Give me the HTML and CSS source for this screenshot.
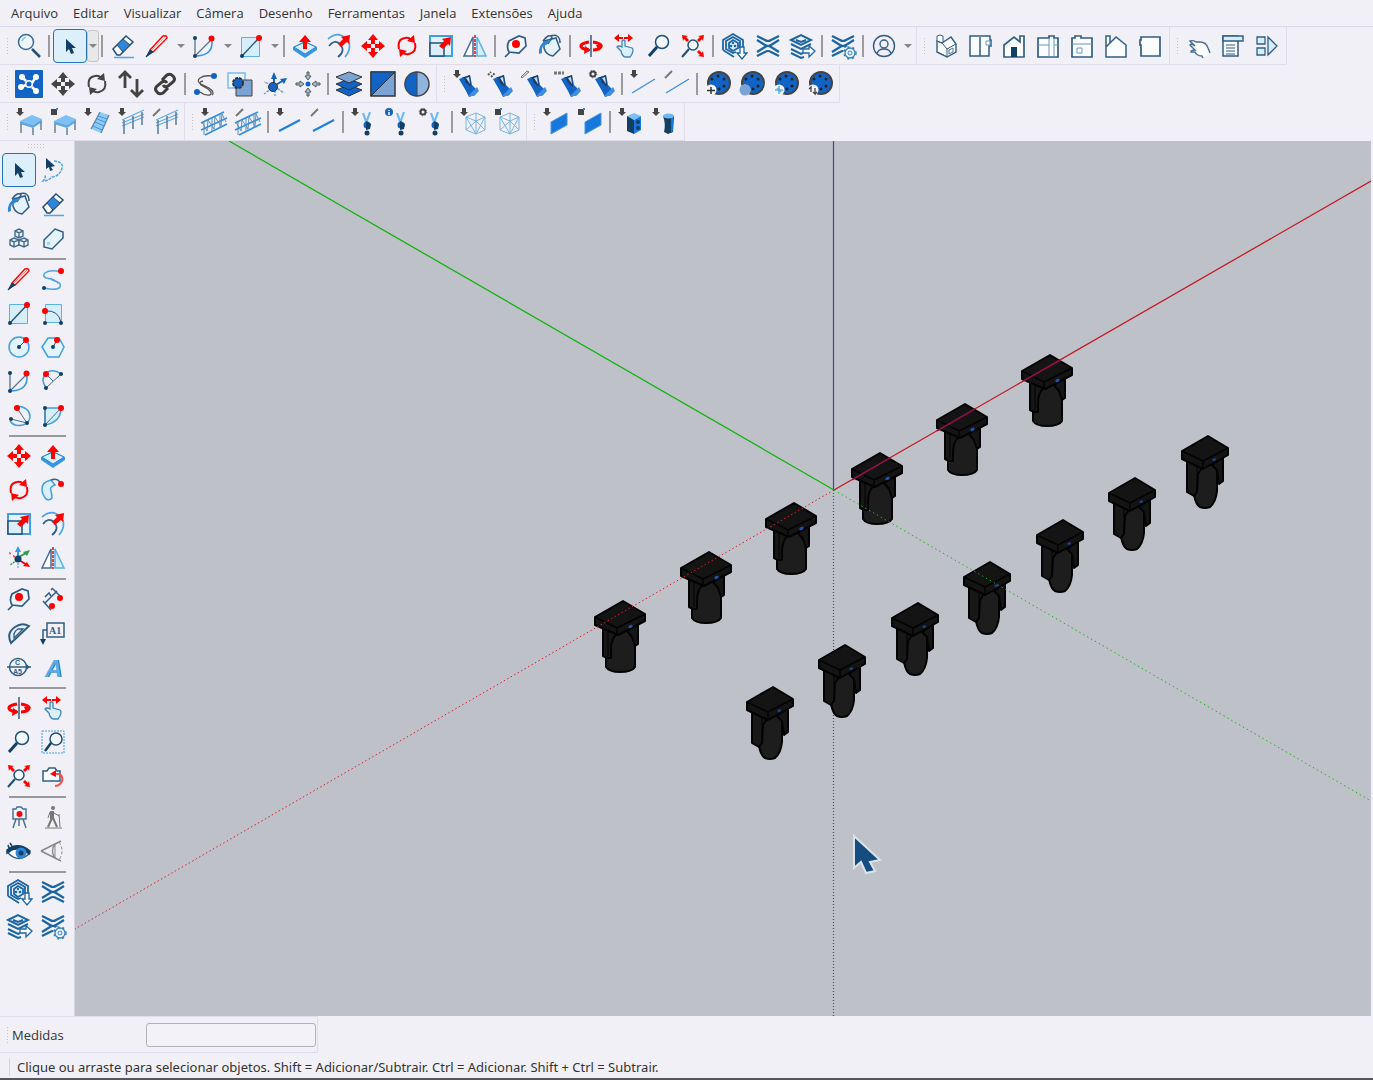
FILE: index.html
```html
<!DOCTYPE html>
<html lang="pt-BR">
<head>
<meta charset="utf-8">
<title>Modelador 3D</title>
<link rel="stylesheet" href="styles.css">
</head>
<body>
<svg class="sprite" aria-hidden="true">
<defs>
<symbol id="cursor" viewBox="0 0 28 28"><path d="M10 7v13l3-3 2 5 3-1-2-5h4z" fill="#123f66"/></symbol>
<symbol id="search" viewBox="0 0 28 28"><circle cx="11" cy="10" r="7.5" fill="#eef7fc" stroke="#3a6a94" stroke-width="1.5"/><path d="M7 9q1-3 4-4" stroke="#7cc3ee" fill="none" stroke-width="1.5"/><path d="M17 17l8 8" stroke="#234f78" stroke-width="2.5"/></symbol>
<symbol id="zoom" viewBox="0 0 28 28"><circle cx="17" cy="10" r="6.5" fill="#f3f8fc" stroke="#1f5078" stroke-width="1.5"/><path d="M12 15l-8 9" stroke="#123f66" stroke-width="3"/></symbol>
<symbol id="zoomwin" viewBox="0 0 28 28"><path d="M3 3h22v22H3z" fill="none" stroke="#3f9fe0" stroke-dasharray="2 1"/><circle cx="17" cy="11" r="6" fill="#f3f8fc" stroke="#1f5078" stroke-width="1.5"/><path d="M12 15l-6 8" stroke="#123f66" stroke-width="2.5"/></symbol>
<symbol id="extents" viewBox="0 0 28 28"><circle cx="14" cy="13" r="5" fill="#f3f8fc" stroke="#1f5078" stroke-width="1.5"/><path d="M10 17l-7 8" stroke="#1f5078" stroke-width="2"/><path d="M3 3l6 1-2 1 3 3-2 2-3-3-1 2zM25 3l-6 1 2 1-3 3 2 2 3-3 1 2zM25 25l-6-1 2-1-3-3 2-2 3 3 1-2z" fill="#f00"/></symbol>
<symbol id="eraser" viewBox="0 0 28 28"><path d="M4 17L17 4l7 6-13 13H8z" fill="#fff" stroke="#234f78" stroke-width="1.5"/><path d="M8 13l6-6 7 6-7 7z" fill="#2f86d6" stroke="#234f78"/><path d="M5 25.500h20" stroke="#4ea6e6" stroke-width="1.500"/></symbol>
<symbol id="pencil" viewBox="0 0 28 28"><path d="M7 18L20 4q4-1 4 2L10 20z" fill="#fff" stroke="#f00" stroke-width="1.400"/><path d="M9 18L22 5" stroke="#f66" stroke-width=".7"/><path d="M3 25l4-7 3 2z" fill="#123f66" stroke="#123f66"/></symbol>
<symbol id="arc" viewBox="0 0 28 28"><path d="M5 6v18L21 8" fill="none" stroke="#567590" stroke-width="1.300"/><path d="M22 9q1 14-15 15" fill="none" stroke="#3797e2" stroke-width="1.600"/><circle cx="5" cy="6" r="2" fill="#123f66"/><circle cx="5" cy="24" r="2" fill="#123f66"/><circle cx="21.500" cy="6.500" r="3" fill="#f00"/></symbol>
<symbol id="rect" viewBox="0 0 28 28"><path d="M4.500 5.500h18v19h-18z" fill="#d6eefa" stroke="#5ab0ea"/><path d="M5 24L21 7" stroke="#234f78" stroke-width="1.300"/><circle cx="5" cy="24" r="2" fill="#123f66"/><circle cx="22" cy="6" r="3" fill="#f00"/></symbol>
<symbol id="push" viewBox="0 0 28 28"><path d="M2 15l12-6 12 6v3l-12 8-12-8z" fill="#3797e2"/><path d="M3 15l11-5 11 5-11 7z" fill="#d9f0fb" stroke="#2c87d4"/><path d="M12 17v-7H8l6-7 6 7h-4v7z" fill="#f00"/></symbol>
<symbol id="offset" viewBox="0 0 28 28"><g fill="none" stroke-width="1.700"><path d="M3 7Q13-1 20 6M24 10q2 8-4 15" stroke="#4ea6e6"/><path d="M4 14q5-7 11-2 6 7-2 13" stroke="#315d84"/></g><path d="M13 12l5-5-2-2 9-2-1 9-2-2-6 5z" fill="#f00"/></symbol>
<symbol id="move" viewBox="0 0 28 28"><path d="M14 2l5 6h-3v4h-4V8H9zM14 26l5-6h-3v-4h-4v4H9zM2 14l6-5v3h4v4H8v3zM26 14l-6-5v3h-4v4h4v3z" fill="currentColor"/></symbol>
<symbol id="rotate" viewBox="0 0 28 28"><g fill="none" stroke="currentColor" stroke-width="2"><path d="M6 17Q4 7 12 6q3-1 7 2M22 11q2 9-6 11-4 1-8-2"/></g><path d="M21 3l1 8-8-2zM7 25l-1-8 8 2z" fill="currentColor"/></symbol>
<symbol id="scale" viewBox="0 0 28 28"><path d="M3 4h22v20H3z" fill="#e2f3fb" stroke="#3f9fe0" stroke-width="2"/><path d="M3 11h14v13H3z" fill="#d9eefa" stroke="#234f78" stroke-width="1.500"/><path d="M12 14l5-5-2-2 9-2-1 9-2-2-5 5z" fill="#f00"/></symbol>
<symbol id="flip" viewBox="0 0 28 28"><path d="M12 5v19H3z" fill="#fff" stroke="#456d91" stroke-width="1.500"/><path d="M16 5v19h9z" fill="#d6eefa" stroke="#5ab0ea" stroke-width="1.500"/><path d="M14 3v22" stroke="#f00" stroke-width="1.500" stroke-dasharray="3 1"/></symbol>
<symbol id="tape" viewBox="0 0 28 28"><path d="M3 25l5-5M7 20q-3-5 0-11l10-5 6 2 1 8-7 7z" fill="#edf6fb" stroke="#315d84" stroke-width="1.700"/><circle cx="14" cy="12" r="4" fill="#f00"/></symbol>
<symbol id="paint" viewBox="0 0 28 28"><path d="M8 9l12-3 4 11-7 7q-7-1-9-8z" fill="#e5f4fc" stroke="#315d84" stroke-width="1.500"/><path d="M7 9q6-8 9-4l-4 7M14 4q10-3 10 7" fill="none" stroke="#315d84" stroke-width="1.500"/><path d="M3 22q-1-9 6-13l7-1q-6 6-9 6-2 3-1 7z" fill="#2f86d6"/></symbol>
<symbol id="orbit" viewBox="0 0 28 28"><path d="M12 10q-11 2-7 6 3 2 7 2M16 10q11 2 7 6-3 2-7 2" fill="none" stroke="#f00" stroke-width="3"/><path d="M8 14l6 4-7 4zM19 13l7 0-4 6z" fill="#f00"/><path d="M14 3v22" stroke="#657f9c" stroke-width="2"/></symbol>
<symbol id="pan" viewBox="0 0 28 28"><path d="M3 6l5-4v3h4v2H8v3zM22 6l-5-4v3h-4v2h4v3z" fill="#f00"/><path d="M10 19l-4-4q1-2 5 0V9q2-2 3 0v5l7 2q2 1 0 6l-2 3h-5q-3-1-4-6z" fill="#d9f0fb" stroke="#4384b4" stroke-width="1.300"/></symbol>
<symbol id="warehouse" viewBox="0 0 28 28"><g fill="none" stroke="#1c65a3" stroke-width="1.800"><path d="M3 18V8l10-6 10 6v9M3 18l11 7"/><path d="M16 20l-3 1-7-4V9l7-4 7 4v7"/><path d="M13 8l5 3v5l-5 3-4-3v-5z" fill="#dceefa"/></g><circle cx="11" cy="14" r="1.300" fill="#1c65a3"/><circle cx="15" cy="14" r="1.300" fill="#1c65a3"/><circle cx="13" cy="11" r="1.200" fill="#1c65a3"/><path d="M20 15h4v6h3l-5 6-5-6h3z" fill="#fff" stroke="#1c65a3" stroke-width="1.300"/></symbol>
<symbol id="ext" viewBox="0 0 28 28"><g fill="none" stroke="#1c65a3" stroke-width="2.200"><path d="M3 4l8 4q3 2 6 0l8-4M3 8l8 5q3 2 6 0l8-5M3 20l8-5q3-2 6 0l8 5M3 24l8-4q3-2 6 0l8 4"/></g></symbol>
<symbol id="layersout" viewBox="0 0 28 28"><g fill="none" stroke="#1c65a3" stroke-width="2"><path d="M3 8l10-5 10 5-10 5zM8 8l5 2 5-2"/><path d="M3 12l10 5 10-5M3 17l10 5 2-1M3 21l10 5 3-1"/></g><path d="M15 17h6v-3l6 5-6 6v-4h-6z" fill="#fff" stroke="#1c65a3" stroke-width="1.300"/></symbol>
<symbol id="extgear" viewBox="0 0 28 28"><use href="#ext"/><circle cx="21" cy="21" r="7" fill="#f1f0f6"/><circle cx="21" cy="21" r="5" fill="#edf6fb" stroke="#3a7fb5" stroke-width="1.300"/><circle cx="21" cy="21" r="6" fill="none" stroke="#3a7fb5" stroke-width="1.500" stroke-dasharray="2 3"/><circle cx="21" cy="21" r="2" fill="none" stroke="#3a7fb5"/></symbol>
<symbol id="user" viewBox="0 0 28 28"><g fill="none" stroke="#315d84" stroke-width="1.400"><circle cx="14" cy="14" r="10.500"/><circle cx="14" cy="12" r="4"/><path d="M7 22q1-5 7-5t7 5"/></g></symbol>
<symbol id="iso" viewBox="0 0 28 28"><g fill="#fafcfe" stroke="#315d84" stroke-width="1.400"><path d="M5 9l5 2 9-6 5 7v8l-9 5-10-5z"/><path d="M5 9V4l3-1 3 1v7zM10 11l5 6 9-5M15 17v8" stroke-width="1"/><path d="M17 18l4-2v4l-4 2z" stroke-width=".8"/></g></symbol>
<symbol id="top" viewBox="0 0 28 28"><path d="M4 4h20v4h1v6h-2v10H4zM14 5v19" fill="#fafcfe" stroke="#315d84" stroke-width="1.500"/><path d="M20 9h4v4h-4z" fill="#fff" stroke="#6d97bb"/></symbol>
<symbol id="front" viewBox="0 0 28 28"><path d="M4 25V13l10-8 6 5V4h4v21z" fill="#fafcfe" stroke="#315d84" stroke-width="1.700"/><path d="M11 15h6v10h-6z" fill="#123f66"/></symbol>
<symbol id="right" viewBox="0 0 28 28"><path d="M4 6h11V4h5v2h4v19H4z" fill="#fafcfe" stroke="#315d84" stroke-width="1.700"/><path d="M4 13h11M20 13h4M15 6v19M20 6v19" stroke="#6d97bb"/></symbol>
<symbol id="back" viewBox="0 0 28 28"><path d="M4 6h3V4h6v2h11v19H4z" fill="#fafcfe" stroke="#315d84" stroke-width="1.700"/><path d="M4 12h20M9 16h5v5H9z" fill="none" stroke="#6d97bb"/></symbol>
<symbol id="left" viewBox="0 0 28 28"><path d="M4 25V4h4v7l6-6 10 8v12zM8 11l-4 4" fill="#fafcfe" stroke="#315d84" stroke-width="1.500"/></symbol>
<symbol id="bottom" viewBox="0 0 28 28"><path d="M5 5h19v19H5V13H4V8h1z" fill="#fafcfe" stroke="#315d84" stroke-width="1.700"/></symbol>
<symbol id="handgrab" viewBox="0 0 28 28"><path d="M18 26l-1-2q-5 0-7-4H6q0-2 4-2l-5-5q1-2 5 1L5 9q3-1 6 1h4q6 0 8 6l2 5" fill="#fff" stroke="#456d91" stroke-width="1.400"/></symbol>
<symbol id="list" viewBox="0 0 28 28"><path d="M4 4h15v20H4z" fill="#fafcfe" stroke="#315d84" stroke-width="1.500"/><path d="M4 4h20v5H4z" fill="#d6eefa" stroke="#315d84" stroke-width="1.500"/><path d="M7 13h9M7 16h9M7 19h9M7 22h9" stroke="#315d84"/></symbol>
<symbol id="play" viewBox="0 0 28 28"><path d="M4 5h8v7H4zM4 16h8v7H4zM15 5l9 9-9 9z" fill="#d6eefa" stroke="#315d84" stroke-width="1.300"/></symbol>
<symbol id="pipe" viewBox="0 0 28 28"><rect width="28" height="28" rx="1" fill="#1263c6"/><path d="M7 7l4 4M21 21l-4-4M6 17l5-2M17 13l4-6" stroke="#fff" stroke-width="2.500"/><circle cx="7" cy="7" r="3" fill="#fff"/><circle cx="6" cy="17" r="3" fill="#fff"/><circle cx="21" cy="7" r="3" fill="#fff"/><circle cx="21" cy="21" r="3" fill="#fff"/><circle cx="14" cy="14" r="4" fill="#fff"/><circle cx="14" cy="14" r="2.500" fill="#1263c6"/></symbol>
<symbol id="updown" viewBox="0 0 28 28"><path d="M8 18V3M2 8l6-6 6 6M20 9v16M14 20l6 6 6-6" fill="none" stroke="#444" stroke-width="2.800"/></symbol>
<symbol id="link" viewBox="0 0 28 28"><g fill="none" stroke="#3d3d3d" stroke-width="3"><path d="M11 10l5-5q3-2 6 1 3 3 0 6l-5 4q-3 2-5-1"/><path d="M17 18l-5 5q-4 2-6-1-3-3 0-6l5-4q3-2 5 1"/></g></symbol>
<symbol id="squiggle" viewBox="0 0 28 28"><path d="M8 22q5 4 10 3 3-2-2-6l-7-4q-3-3 2-4M20 6q-8-1-12 2-4 3 1 6l8 4q6 4 3 7" fill="none" stroke="#555" stroke-width="1.300"/><circle cx="22" cy="6" r="3" fill="#1263c6"/><circle cx="5" cy="22" r="3" fill="#1263c6"/></symbol>
<symbol id="intersect" viewBox="0 0 28 28"><path d="M2 3h17v15H2z" fill="#edf6fb" stroke="#79bbed" stroke-width="1.500"/><path d="M10 10h16v16H10z" fill="#7ba4d4" stroke="#444"/><circle cx="12" cy="13" r="5" fill="#1263c6" stroke="#333" stroke-width="2" stroke-dasharray="3 1"/></symbol>
<symbol id="axis3" viewBox="0 0 28 28"><path d="M14 16V4M14 16l10-6" stroke="#1263c6" stroke-width="2"/><path d="M14 2l3 7h-6zM27 8l-3 6-4-5z" fill="#1263c6"/><path d="M14 16l10 7M12 18l-8 6M12 15l-8-3M15 20v6" stroke="#7ba4d4" stroke-width="1.500" stroke-dasharray="3 1"/><circle cx="13" cy="17" r="4.500" fill="#1263c6" stroke="#333"/></symbol>
<symbol id="snap" viewBox="0 0 28 28"><path d="M13 2h2v4h2l-3 4-3-4h2zM13 26h2v-4h2l-3-4-3 4h2zM2 13v2h4v2l4-3-4-3v2zM26 13v2h-4v2l-4-3 4-3v2z" fill="#a9c1dc" stroke="#555"/><circle cx="14" cy="14" r="2.500" fill="#1263c6"/></symbol>
<symbol id="stack" viewBox="0 0 28 28"><g stroke="#333"><path d="M1 20l13-5 13 5-13 6z" fill="#1263c6"/><path d="M1 14l13-5 13 5-13 6z" fill="#1263c6"/><path d="M1 7l13-5 13 5-13 6z" fill="#7ba4d4"/></g></symbol>
<symbol id="diag" viewBox="0 0 28 28"><path d="M2 2h24v24H2z" fill="#7ba4d4" stroke="#333" stroke-width="1.500"/><path d="M2 2h24L2 26z" fill="#1263c6" stroke="#333"/></symbol>
<symbol id="half" viewBox="0 0 28 28"><circle cx="14" cy="14" r="12" fill="#8fb5df" stroke="#444" stroke-width="1.500"/><path d="M14 2a12 12 0 0 0 0 24z" fill="#1263c6" stroke="#444"/></symbol>
<symbol id="m-down" viewBox="0 0 28 28"><path d="M3 0h4v4h2l-4 4-4-4h2z" fill="#444"/></symbol>
<symbol id="m-pen" viewBox="0 0 28 28"><path d="M2 8l7-7" stroke="#777" stroke-width="2"/></symbol>
<symbol id="m-sq" viewBox="0 0 28 28"><path d="M2 1h6v6H2z" fill="#444"/><path d="M7 0h2v2H7z" fill="#2f86d6"/></symbol>
<symbol id="m-gear" viewBox="0 0 28 28"><circle cx="5" cy="4" r="2.500" fill="none" stroke="#444" stroke-width="2"/><circle cx="5" cy="4" r="3.800" fill="none" stroke="#444" stroke-dasharray="1 2"/></symbol>
<symbol id="beam" viewBox="0 0 28 28"><path d="M7 9l11-4 2 10 6 6-3 4-6 2-3-6z" fill="#1263c6"/><path d="M9 8l9-3 1 12-5-4-2-5" fill="#1d3f66"/><path d="M14 8l3-1 1 7z" fill="#c9dcee"/><path d="M16 26l9-9 2 4-5 5z" fill="#3f8fdc"/></symbol>
<symbol id="b-down" viewBox="0 0 28 28"><use href="#beam"/><use href="#m-down"/></symbol>
<symbol id="b-turn" viewBox="0 0 28 28"><use href="#beam"/><path d="M2 5l3-3M5 7l4-4" stroke="#555" stroke-width="2" stroke-dasharray="2 1"/></symbol>
<symbol id="b-pen" viewBox="0 0 28 28"><use href="#beam"/><path d="M1 7l6-6 2 1-7 6z" fill="#ddd" stroke="#777"/></symbol>
<symbol id="b-dots" viewBox="0 0 28 28"><use href="#beam"/><path d="M0 3h10" stroke="#777" stroke-width="3" stroke-dasharray="3 1"/></symbol>
<symbol id="b-gear" viewBox="0 0 28 28"><use href="#beam"/><use href="#m-gear"/></symbol>
<symbol id="l-down" viewBox="0 0 28 28"><path d="M3 23L26 9" stroke="#3f8ddb" stroke-width="1.300"/><use href="#m-down"/></symbol>
<symbol id="l-pen" viewBox="0 0 28 28"><path d="M3 23L26 9" stroke="#3f8ddb" stroke-width="1.300"/><use href="#m-pen"/></symbol>
<symbol id="t-down" viewBox="0 0 28 28"><path d="M4 23L25 12" stroke="#1c80df" stroke-width="2"/><use href="#m-down"/></symbol>
<symbol id="t-pen" viewBox="0 0 28 28"><path d="M4 23L25 12" stroke="#1c80df" stroke-width="2"/><use href="#m-pen"/></symbol>
<symbol id="disc" viewBox="0 0 28 28"><circle cx="15" cy="13" r="11" fill="#1263c6" stroke="#444" stroke-width="2"/><g fill="#222"><circle cx="14" cy="6" r="1.500"/><circle cx="8" cy="9" r="1.500"/><circle cx="20" cy="9" r="1.500"/><circle cx="20" cy="16" r="1.500"/><circle cx="15" cy="19" r="1.500"/></g><circle cx="7" cy="20" r="5.500" fill="#f6f6fa"/></symbol>
<symbol id="d-plus" viewBox="0 0 28 28"><use href="#disc"/><path d="M7 17v7M3 20.500h8" stroke="#333" stroke-width="1.500"/></symbol>
<symbol id="d-dot" viewBox="0 0 28 28"><use href="#disc"/><circle cx="7" cy="20" r="5.500" fill="#7ba4d4"/></symbol>
<symbol id="d-move" viewBox="0 0 28 28"><use href="#disc"/><path d="M7 16v8M3 20h8M5 18l4 4" stroke="#5ab0ea" stroke-width="1.500"/></symbol>
<symbol id="d-swap" viewBox="0 0 28 28"><use href="#disc"/><path d="M5 22v-5l-2 2M9 18v6l-2-2M9 24l2-2" stroke="#444" fill="none" stroke-width="1.300"/></symbol>
<symbol id="slab" viewBox="0 0 28 28"><path d="M5 13l12-6 10 4-9 6z" fill="#7cc0f4"/><path d="M5 13l13 4v3L5 16zM18 17l9-6v3l-9 6z" fill="#5fa6e2"/><path d="M6 16v9M18 20v7M26 14v8" stroke="#6b7f95" stroke-width="1.500"/></symbol>
<symbol id="s-down" viewBox="0 0 28 28"><use href="#slab"/><use href="#m-down"/></symbol>
<symbol id="s-sq" viewBox="0 0 28 28"><use href="#slab"/><use href="#m-sq"/></symbol>
<symbol id="ladder" viewBox="0 0 28 28"><path d="M17 4l9 3-8 18-10-4z" fill="#8ccaf7"/><path d="M17 4L8 21M26 7l-8 18" stroke="#5d87ad" stroke-width="1.300"/><path d="M15 8l9 3M14 11l8 3M12 14l9 4M10 18l9 4" stroke="#4a94d4"/><use href="#m-down"/></symbol>
<symbol id="rail" viewBox="0 0 28 28"><path d="M5 12L27 2M5 15L27 6M5 18l22-9" stroke="#62abe6" stroke-width="1.200"/><path d="M7 12v14M16 8v13M25 4v13" stroke="#587b9c" stroke-width="1.500"/></symbol>
<symbol id="r-down" viewBox="0 0 28 28"><use href="#rail"/><use href="#m-down"/></symbol>
<symbol id="r-pen" viewBox="0 0 28 28"><use href="#rail"/><use href="#m-pen"/></symbol>
<symbol id="truss" viewBox="0 0 28 28"><path d="M1 15L24 4M1 22l26-12M5 27l22-11" stroke="#2f8fe4" stroke-width="1.700"/><path d="M2 14l5 9 1-11 6 9 1-12 6 9 1-12 4 8M4 27V14M12 24V10M20 20V6" stroke="#5e8fb9" fill="none"/></symbol>
<symbol id="tr-down" viewBox="0 0 28 28"><use href="#truss"/><use href="#m-down"/></symbol>
<symbol id="tr-pen" viewBox="0 0 28 28"><use href="#truss"/><use href="#m-pen"/></symbol>
<symbol id="brace" viewBox="0 0 28 28"><path d="M13 5l5 14M20 4l-5 14" stroke="#6db8f2" stroke-width="2.200"/><circle cx="17" cy="17" r="3.500" fill="#1263c6"/><path d="M16 13l5 3-1 5-4 1z" fill="#123f66"/><circle cx="17" cy="25" r="2.500" fill="#123f66"/></symbol>
<symbol id="br-down" viewBox="0 0 28 28"><use href="#brace"/><use href="#m-down"/></symbol>
<symbol id="br-info" viewBox="0 0 28 28"><use href="#brace"/><circle cx="5" cy="4" r="4" fill="#1263c6"/><path d="M5 2v1M5 4v3" stroke="#fff" stroke-width="1.500"/></symbol>
<symbol id="br-gear" viewBox="0 0 28 28"><use href="#brace"/><use href="#m-gear"/></symbol>
<symbol id="wire" viewBox="0 0 28 28"><path d="M7 9l10-4 9 4v13l-9 4-10-4zM7 9l10 4 9-4M17 5v21M7 22l10-9 9 9M7 9l10 17L26 9" fill="none" stroke="#78b6e4"/></symbol>
<symbol id="w-down" viewBox="0 0 28 28"><use href="#wire"/><use href="#m-down"/></symbol>
<symbol id="w-sq" viewBox="0 0 28 28"><use href="#wire"/><use href="#m-sq"/></symbol>
<symbol id="p-down" viewBox="0 0 28 28"><path d="M9 14l16-9v12L9 26z" fill="#1677dc" stroke="#4d93d8"/><use href="#m-down"/></symbol>
<symbol id="p-sq" viewBox="0 0 28 28"><path d="M9 14l16-9v12L9 26z" fill="#1677dc" stroke="#4d93d8"/><use href="#m-sq"/></symbol>
<symbol id="block" viewBox="0 0 28 28"><path d="M10 8l7-3 7 3-7 4z" fill="#7cc0f4"/><path d="M10 8l7 4v14l-7-3z" fill="#123f66"/><path d="M17 12l7-4v14l-7 4z" fill="#1677dc"/><circle cx="21" cy="14" r="2" fill="#123f66"/><circle cx="21" cy="20" r="2" fill="#123f66"/><use href="#m-down"/></symbol>
<symbol id="pile" viewBox="0 0 28 28"><path d="M12 8h11l-1 16-5 2-4-2q2-8-1-16z" fill="#123f66"/><path d="M20 9h2v14l-2 2z" fill="#1677dc"/><ellipse cx="17.500" cy="8" rx="5.500" ry="2.500" fill="#6db8f2"/><use href="#m-down"/></symbol>
<symbol id="lasso" viewBox="0 0 28 28"><path d="M15 5q10 1 8 7-2 8-10 9-4 4-9 4 3-3 2-6" fill="none" stroke="#4ea6e6" stroke-width="1.500" stroke-dasharray="3 1"/><path d="M7 2l9 8-4 1 2 3-3 1-1-4-3 2z" fill="#123f66"/></symbol>
<symbol id="cubes" viewBox="0 0 28 28"><g fill="#edf6fb" stroke="#456d91" stroke-width="1.400"><path d="M14 5l4 2v5l-4 2-4-2V7zM10 7l4 2 4-2M14 9v5"/><path d="M9 14l5 2v5l-5 2-4-2v-5zM5 16l4 2 5-2M9 18v5"/><path d="M19 14l4 2v5l-4 2-5-2v-5zM14 16l5 2 4-2M19 18v5"/></g></symbol>
<symbol id="tag" viewBox="0 0 28 28"><path d="M5 16L16 5l8 3v6L13 25l-8-2z" fill="#e2f3fb" stroke="#315d84" stroke-width="1.500"/><path d="M8 18h3v3H8z" fill="#9fd3f2"/></symbol>
<symbol id="free" viewBox="0 0 28 28"><path d="M5 23q13 3 16-1 2-4-5-6-5-1-3-3M22 7Q11 4 6 8q-3 3 1 5 9 1 12 5" fill="none" stroke="#4ea6e6" stroke-width="1.600"/><circle cx="5" cy="23" r="2" fill="#123f66"/><circle cx="22" cy="6" r="3" fill="#f00"/></symbol>
<symbol id="rrect" viewBox="0 0 28 28"><path d="M6.500 5.500h16v18h-16z" fill="#d6eefa" stroke="#5ab0ea"/><path d="M7 12q12-1 15 11" fill="none" stroke="#234f78"/><circle cx="6" cy="12" r="3" fill="#f00"/><circle cx="6" cy="24" r="2" fill="#123f66"/><circle cx="22" cy="24" r="2" fill="#123f66"/></symbol>
<symbol id="circ" viewBox="0 0 28 28"><circle cx="14" cy="14" r="10" fill="#e2f3fb" stroke="#3f9fe0" stroke-width="1.500"/><path d="M14 14l7-7" stroke="#234f78"/><circle cx="14" cy="14" r="2" fill="#123f66"/><circle cx="21" cy="7" r="3" fill="#f00"/></symbol>
<symbol id="poly" viewBox="0 0 28 28"><path d="M3 14L9 5h11l5 9-5 10H9z" fill="#e2f3fb" stroke="#3f9fe0" stroke-width="1.500"/><path d="M14 14l4-7" stroke="#234f78"/><circle cx="14" cy="14" r="2" fill="#123f66"/><circle cx="18" cy="7" r="3" fill="#f00"/></symbol>
<symbol id="arc2" viewBox="0 0 28 28"><path d="M7 21Q1 12 7 6q7-5 15 1" fill="none" stroke="#3f9fe0" stroke-width="1.500"/><path d="M7 21L22 7M7 7l7 7" stroke="#456d91"/><circle cx="7" cy="21" r="2" fill="#123f66"/><circle cx="22" cy="7" r="2" fill="#123f66"/><circle cx="7" cy="7" r="3" fill="#f00"/></symbol>
<symbol id="arc3" viewBox="0 0 28 28"><path d="M12 5q12 1 13 10 0 7-7 9-9 2-13-4" fill="none" stroke="#3f9fe0" stroke-width="1.500"/><path d="M6 18l16 4L12 7" fill="none" stroke="#456d91"/><circle cx="6" cy="18" r="2" fill="#123f66"/><circle cx="22" cy="22" r="2" fill="#123f66"/><circle cx="12" cy="7" r="3" fill="#f00"/></symbol>
<symbol id="pie" viewBox="0 0 28 28"><path d="M6 7h16q0 14-16 17z" fill="#d6eefa" stroke="#3f9fe0" stroke-width="1.500"/><path d="M6 7v17L22 7" fill="none" stroke="#456d91"/><circle cx="6" cy="7" r="2" fill="#123f66"/><circle cx="6" cy="24" r="2" fill="#123f66"/><circle cx="22" cy="7" r="3" fill="#f00"/></symbol>
<symbol id="follow" viewBox="0 0 28 28"><path d="M3 13q0-7 9-9l4 5q-6 2-4 6 1 3 1 7-2 3-6 1-4-5-4-10z" fill="#d9f0fb" stroke="#3f9fe0" stroke-width="1.500"/><path d="M12 4q6-2 9 2" fill="none" stroke="#315d84" stroke-width="1.500"/><circle cx="22" cy="8" r="3" fill="#f00"/></symbol>
<symbol id="axes" viewBox="0 0 28 28"><path d="M13 14V5" stroke="#3797e2" stroke-width="2"/><path d="M13 2l3 6h-6z" fill="#3797e2"/><path d="M14 13l7-4" stroke="#2e9e4a" stroke-width="2"/><path d="M25 6l-3 6-4-4z" fill="#2e9e4a"/><path d="M14 16l8 5" stroke="#f00" stroke-width="2"/><path d="M25 23l-7-1 4-4zM4 8l2 1-1 2zM8 11l2 1-1 2z" fill="#f00"/><path d="M12 16l-7 5" stroke="#2e9e4a" stroke-width="1.500" stroke-dasharray="2 1"/><path d="M13 19v6" stroke="#3797e2" stroke-dasharray="2 1"/><circle cx="13" cy="15" r="3.500" fill="#123f66"/></symbol>
<symbol id="dims" viewBox="0 0 28 28"><path d="M6 18L18 6M4 16l8 9M14 4l9 9" stroke="#315d84" stroke-width="1.500"/><path d="M6 12l4-4 2 3M12 5l2-2" stroke="#315d84" fill="none" stroke-width="1.500"/><circle cx="21" cy="13" r="3" fill="#f00"/><circle cx="13" cy="21" r="3" fill="#f00"/></symbol>
<symbol id="protractor" viewBox="0 0 28 28"><path d="M6 24Q1 14 10 8q7-5 14-1z" fill="#e2f3fb" stroke="#315d84" stroke-width="2"/><path d="M9 19q-1-6 4-9l5 0z" fill="#f1f0f6" stroke="#315d84" stroke-width="1.300"/></symbol>
<symbol id="label" viewBox="0 0 28 28"><path d="M8 4h17v14H8zM8 11H4v12" fill="none" stroke="#315d84" stroke-width="1.500"/><path d="M1 20h6l-3 6z" fill="#123f66"/><text x="10" y="15" class="glyph-label">A1</text></symbol>
<symbol id="section" viewBox="0 0 28 28"><path d="M14 5l11 9-11 9z" fill="#315d84"/><circle cx="13" cy="14" r="8.500" fill="#edf3f8" stroke="#315d84" stroke-width="1.500"/><path d="M2 14h24" stroke="#315d84" stroke-width="1.500"/><text x="10" y="12" class="glyph-mini">C</text><text x="8" y="21" class="glyph-mini">A5</text></symbol>
<symbol id="text3d" viewBox="0 0 28 28"><text x="7" y="24" class="glyph-big shade">A</text><text x="6" y="24" class="glyph-big">A</text></symbol>
<symbol id="prev" viewBox="0 0 28 28"><path d="M4 9h4l2-3h6l2 3h3v10H4z" fill="#fafcfe" stroke="#315d84" stroke-width="1.500"/><path d="M15 12h6q5 5 0 10-2 2-5 2" fill="none" stroke="#f45050" stroke-width="2"/><path d="M11 12l6-4v7z" fill="#f00"/></symbol>
<symbol id="camera" viewBox="0 0 28 28"><path d="M8 6h3l1-2h4l2 2h3v10H8zM11 16l-3 9M18 16l3 9M14 16v7" fill="#edf6fb" stroke="#456d91" stroke-width="1.400"/><circle cx="14.500" cy="11" r="3" fill="#f00"/></symbol>
<symbol id="walk" viewBox="0 0 28 28"><circle cx="14" cy="5" r="2" fill="#777"/><g fill="none" stroke="#777"><path d="M13 8v8" stroke-width="4"/><path d="M13 15l-4 9M14 15l4 9" stroke-width="2"/><path d="M15 10l5 3M11 9l-2 6M20 11l1 13M6 25h17"/></g></symbol>
<symbol id="eye" viewBox="0 0 28 28"><path d="M3 16Q14 5 25 16 14 27 3 16z" fill="#fff" stroke="#315d84" stroke-width="1.500"/><path d="M2 13q11-9 23 1l-1 3q-8-7-18-4l-4 3zM4 11L3 8M7 9L5 6" fill="#123f66" stroke="#123f66" stroke-width="1.500"/><circle cx="16" cy="16" r="5.500" fill="#2f86d6"/><circle cx="16" cy="16" r="2.500" fill="#123f66"/></symbol>
<symbol id="view" viewBox="0 0 28 28"><path d="M2 14L22 4M2 14l20 10M16 7q-5 7 0 14" fill="none" stroke="#888" stroke-width="1.400"/><path d="M16 7v14" stroke="#888"/><path d="M20 5q6 9 0 18" fill="none" stroke="#888" stroke-dasharray="3 2"/></symbol>
<g id="pier" stroke="#030303" stroke-width="2" stroke-linejoin="round"><path d="M-17 30v37q3 5 14 5 12 0 15-5V24z" fill="#1d1d1d"/><path d="M-20 26v30l4 2h4v-8q0-12 6-16z" fill="#171717"/><path d="M-15 30v26" stroke-width="1"/><path d="M15 22v22l-3 2-3-9-5-6z" fill="#151515"/><path d="M0 1l22 13v7L-5 35-28 25v-8z" fill="#141414"/><path d="M-28 17l22 11 28-14M-6 28v7" fill="none" stroke-width="1.500"/><path d="M6 26l3-1v2l-3 1z" fill="#1c55b0" stroke="#1c55b0" stroke-width="1"/></g>
<g id="pilecap" stroke="#030303" stroke-width="2" stroke-linejoin="round"><path d="M-14 32v28q2 10 6 12 5 2 10 0 6-5 7-16V24z" fill="#1d1d1d"/><path d="M-21 24v33l7 4 3-4 1-18 4-6z" fill="#181818"/><path d="M-11 32v26" stroke-width="1"/><path d="M15 22v24l-4 3-2-14-5-5z" fill="#151515"/><path d="M0 1l20 12v7L-5 34-26 24v-8z" fill="#141414"/><path d="M-26 16l21 10 25-13M-5 26v8" fill="none" stroke-width="1.500"/><path d="M5 25l2-1v1z" stroke="#1c46a0" stroke-width="1.500"/></g>
</defs>
</svg>
<div class="app">
<nav class="menu" aria-label="Menu principal">
<button>Arquivo</button><button>Editar</button><button>Visualizar</button><button>Câmera</button><button>Desenho</button><button>Ferramentas</button><button>Janela</button><button>Extensões</button><button>Ajuda</button>
</nav>
<div class="bar">
<div class="group"><i class="grip"></i>
<button class="tool" aria-label="Pesquisar"><svg><use href="#search"/></svg></button><i class="sep"></i>
<button class="tool active" aria-label="Selecionar"><svg><use href="#cursor"/></svg></button><button class="drop boxed" aria-label="Opções de seleção"></button><i class="sep"></i>
<button class="tool" aria-label="Borracha"><svg><use href="#eraser"/></svg></button>
<button class="tool" aria-label="Lápis"><svg><use href="#pencil"/></svg></button><button class="drop" aria-label="Opções de linha"></button>
<button class="tool" aria-label="Arco"><svg><use href="#arc"/></svg></button><button class="drop" aria-label="Opções de arco"></button>
<button class="tool" aria-label="Retângulo"><svg><use href="#rect"/></svg></button><button class="drop" aria-label="Opções de forma"></button><i class="sep"></i>
<button class="tool" aria-label="Empurrar e puxar"><svg><use href="#push"/></svg></button>
<button class="tool" aria-label="Deslocamento"><svg><use href="#offset"/></svg></button>
<button class="tool red" aria-label="Mover"><svg><use href="#move"/></svg></button>
<button class="tool red" aria-label="Girar"><svg><use href="#rotate"/></svg></button>
<button class="tool" aria-label="Escala"><svg><use href="#scale"/></svg></button>
<button class="tool" aria-label="Inverter"><svg><use href="#flip"/></svg></button><i class="sep"></i>
<button class="tool" aria-label="Fita métrica"><svg><use href="#tape"/></svg></button>
<button class="tool" aria-label="Pintura"><svg><use href="#paint"/></svg></button><i class="sep"></i>
<button class="tool" aria-label="Orbitar"><svg><use href="#orbit"/></svg></button>
<button class="tool" aria-label="Panorâmica"><svg><use href="#pan"/></svg></button>
<button class="tool" aria-label="Zoom"><svg><use href="#zoom"/></svg></button>
<button class="tool" aria-label="Modelo centralizado"><svg><use href="#extents"/></svg></button><i class="sep"></i>
<button class="tool" aria-label="3D Warehouse"><svg><use href="#warehouse"/></svg></button>
<button class="tool" aria-label="Extension Warehouse"><svg><use href="#ext"/></svg></button>
<button class="tool" aria-label="Enviar ao LayOut"><svg><use href="#layersout"/></svg></button><i class="sep"></i>
<button class="tool" aria-label="Gerenciador de extensões"><svg><use href="#extgear"/></svg></button><i class="sep"></i>
<button class="tool" aria-label="Conta"><svg><use href="#user"/></svg></button><button class="drop" aria-label="Opções da conta"></button>
</div>
<div class="group"><i class="grip"></i>
<button class="tool" aria-label="Isométrica"><svg><use href="#iso"/></svg></button>
<button class="tool" aria-label="Superior"><svg><use href="#top"/></svg></button>
<button class="tool" aria-label="Frontal"><svg><use href="#front"/></svg></button>
<button class="tool" aria-label="Direita"><svg><use href="#right"/></svg></button>
<button class="tool" aria-label="Posterior"><svg><use href="#back"/></svg></button>
<button class="tool" aria-label="Esquerda"><svg><use href="#left"/></svg></button>
<button class="tool" aria-label="Inferior"><svg><use href="#bottom"/></svg></button>
</div>
<div class="group"><i class="grip"></i>
<button class="tool" aria-label="Interagir"><svg><use href="#handgrab"/></svg></button>
<button class="tool" aria-label="Opções do componente"><svg><use href="#list"/></svg></button>
<button class="tool" aria-label="Atributos do componente"><svg><use href="#play"/></svg></button>
</div>
</div>
<div class="bar">
<div class="group"><i class="grip"></i>
<button class="tool" aria-label="Conexões"><svg><use href="#pipe"/></svg></button>
<button class="tool gray" aria-label="Mover peça"><svg><use href="#move"/></svg></button>
<button class="tool gray" aria-label="Girar peça"><svg><use href="#rotate"/></svg></button>
<button class="tool" aria-label="Trocar"><svg><use href="#updown"/></svg></button>
<button class="tool" aria-label="Vincular"><svg><use href="#link"/></svg></button><i class="sep"></i>
<button class="tool" aria-label="Caminho"><svg><use href="#squiggle"/></svg></button>
<button class="tool" aria-label="Interseção"><svg><use href="#intersect"/></svg></button>
<button class="tool" aria-label="Eixos da peça"><svg><use href="#axis3"/></svg></button>
<button class="tool" aria-label="Centralizar"><svg><use href="#snap"/></svg></button><i class="sep"></i>
<button class="tool" aria-label="Camadas"><svg><use href="#stack"/></svg></button>
<button class="tool" aria-label="Dividir"><svg><use href="#diag"/></svg></button>
<button class="tool" aria-label="Contraste"><svg><use href="#half"/></svg></button>
</div>
<div class="group"><i class="grip"></i>
<button class="tool" aria-label="Inserir perfil"><svg><use href="#b-down"/></svg></button>
<button class="tool" aria-label="Girar perfil"><svg><use href="#b-turn"/></svg></button>
<button class="tool" aria-label="Editar perfil"><svg><use href="#b-pen"/></svg></button>
<button class="tool" aria-label="Distribuir perfil"><svg><use href="#b-dots"/></svg></button>
<button class="tool" aria-label="Configurar perfil"><svg><use href="#b-gear"/></svg></button><i class="sep"></i>
<button class="tool" aria-label="Inserir linha"><svg><use href="#l-down"/></svg></button>
<button class="tool" aria-label="Editar linha"><svg><use href="#l-pen"/></svg></button><i class="sep"></i>
<button class="tool" aria-label="Adicionar furo"><svg><use href="#d-plus"/></svg></button>
<button class="tool" aria-label="Furo"><svg><use href="#d-dot"/></svg></button>
<button class="tool" aria-label="Mover furo"><svg><use href="#d-move"/></svg></button>
<button class="tool" aria-label="Trocar furo"><svg><use href="#d-swap"/></svg></button>
</div>
</div>
<div class="bar">
<div class="group"><i class="grip"></i>
<button class="tool" aria-label="Inserir laje"><svg><use href="#s-down"/></svg></button>
<button class="tool" aria-label="Editar laje"><svg><use href="#s-sq"/></svg></button>
<button class="tool" aria-label="Inserir escada"><svg><use href="#ladder"/></svg></button>
<button class="tool" aria-label="Inserir guarda-corpo"><svg><use href="#r-down"/></svg></button>
<button class="tool" aria-label="Editar guarda-corpo"><svg><use href="#r-pen"/></svg></button>
</div>
<div class="group"><i class="grip"></i>
<button class="tool" aria-label="Inserir treliça"><svg><use href="#tr-down"/></svg></button>
<button class="tool" aria-label="Editar treliça"><svg><use href="#tr-pen"/></svg></button><i class="sep"></i>
<button class="tool" aria-label="Inserir terça"><svg><use href="#t-down"/></svg></button>
<button class="tool" aria-label="Editar terça"><svg><use href="#t-pen"/></svg></button><i class="sep"></i>
<button class="tool" aria-label="Inserir tirante"><svg><use href="#br-down"/></svg></button>
<button class="tool" aria-label="Informações do tirante"><svg><use href="#br-info"/></svg></button>
<button class="tool" aria-label="Configurar tirante"><svg><use href="#br-gear"/></svg></button><i class="sep"></i>
<button class="tool" aria-label="Inserir malha"><svg><use href="#w-down"/></svg></button>
<button class="tool" aria-label="Editar malha"><svg><use href="#w-sq"/></svg></button>
</div>
<div class="group"><i class="grip"></i>
<button class="tool" aria-label="Inserir painel"><svg><use href="#p-down"/></svg></button>
<button class="tool" aria-label="Editar painel"><svg><use href="#p-sq"/></svg></button><i class="sep"></i>
<button class="tool" aria-label="Inserir bloco"><svg><use href="#block"/></svg></button>
<button class="tool" aria-label="Inserir estaca"><svg><use href="#pile"/></svg></button>
</div>
</div>
<main class="work">
<aside class="side"><i class="grip wide"></i>
<div class="grid">
<button class="tool active" aria-label="Selecionar"><svg><use href="#cursor"/></svg></button><button class="tool" aria-label="Laço"><svg><use href="#lasso"/></svg></button>
<button class="tool" aria-label="Pintura"><svg><use href="#paint"/></svg></button><button class="tool" aria-label="Borracha"><svg><use href="#eraser"/></svg></button>
<button class="tool" aria-label="Componente"><svg><use href="#cubes"/></svg></button><button class="tool" aria-label="Etiqueta"><svg><use href="#tag"/></svg></button>
<i class="rule"></i>
<button class="tool" aria-label="Linha"><svg><use href="#pencil"/></svg></button><button class="tool" aria-label="Mão livre"><svg><use href="#free"/></svg></button>
<button class="tool" aria-label="Retângulo"><svg><use href="#rect"/></svg></button><button class="tool" aria-label="Retângulo girado"><svg><use href="#rrect"/></svg></button>
<button class="tool" aria-label="Círculo"><svg><use href="#circ"/></svg></button><button class="tool" aria-label="Polígono"><svg><use href="#poly"/></svg></button>
<button class="tool" aria-label="Arco"><svg><use href="#arc"/></svg></button><button class="tool" aria-label="Arco de 2 pontos"><svg><use href="#arc2"/></svg></button>
<button class="tool" aria-label="Arco de 3 pontos"><svg><use href="#arc3"/></svg></button><button class="tool" aria-label="Pizza"><svg><use href="#pie"/></svg></button>
<i class="rule"></i>
<button class="tool red" aria-label="Mover"><svg><use href="#move"/></svg></button><button class="tool" aria-label="Empurrar e puxar"><svg><use href="#push"/></svg></button>
<button class="tool red" aria-label="Girar"><svg><use href="#rotate"/></svg></button><button class="tool" aria-label="Siga-me"><svg><use href="#follow"/></svg></button>
<button class="tool" aria-label="Escala"><svg><use href="#scale"/></svg></button><button class="tool" aria-label="Deslocamento"><svg><use href="#offset"/></svg></button>
<button class="tool" aria-label="Eixos"><svg><use href="#axes"/></svg></button><button class="tool" aria-label="Inverter"><svg><use href="#flip"/></svg></button>
<i class="rule"></i>
<button class="tool" aria-label="Fita métrica"><svg><use href="#tape"/></svg></button><button class="tool" aria-label="Dimensões"><svg><use href="#dims"/></svg></button>
<button class="tool" aria-label="Transferidor"><svg><use href="#protractor"/></svg></button><button class="tool" aria-label="Texto"><svg><use href="#label"/></svg></button>
<button class="tool" aria-label="Plano de seção"><svg><use href="#section"/></svg></button><button class="tool" aria-label="Texto 3D"><svg><use href="#text3d"/></svg></button>
<i class="rule"></i>
<button class="tool" aria-label="Orbitar"><svg><use href="#orbit"/></svg></button><button class="tool" aria-label="Panorâmica"><svg><use href="#pan"/></svg></button>
<button class="tool" aria-label="Zoom"><svg><use href="#zoom"/></svg></button><button class="tool" aria-label="Janela de zoom"><svg><use href="#zoomwin"/></svg></button>
<button class="tool" aria-label="Modelo centralizado"><svg><use href="#extents"/></svg></button><button class="tool" aria-label="Vista anterior"><svg><use href="#prev"/></svg></button>
<i class="rule"></i>
<button class="tool" aria-label="Posicionar câmera"><svg><use href="#camera"/></svg></button><button class="tool" aria-label="Passear"><svg><use href="#walk"/></svg></button>
<button class="tool" aria-label="Girar em torno"><svg><use href="#eye"/></svg></button><button class="tool" aria-label="Campo de visão"><svg><use href="#view"/></svg></button>
<i class="rule"></i>
<button class="tool" aria-label="3D Warehouse"><svg><use href="#warehouse"/></svg></button><button class="tool" aria-label="Extension Warehouse"><svg><use href="#ext"/></svg></button>
<button class="tool" aria-label="Enviar ao LayOut"><svg><use href="#layersout"/></svg></button><button class="tool" aria-label="Gerenciador de extensões"><svg><use href="#extgear"/></svg></button>
</div>
</aside>
<section class="viewport" aria-label="Modelo">
<svg class="scene" viewBox="75 141 1296 875" preserveAspectRatio="xMidYMid slice">
<g fill="none">
<path d="M833.500 490V141" stroke="#4a3cc8" stroke-width="1.200"/>
<path d="M833.500 490v526" stroke="#3c46d2" stroke-width="1.200" stroke-dasharray="1 2"/>
<path d="M834 490L229 141" stroke="#13b413" stroke-width="1.300"/>
</g>
<use href="#pier" x="1050" y="354"/><use href="#pier" x="965" y="403"/><use href="#pier" x="880" y="452"/><use href="#pier" x="794" y="502"/><use href="#pier" x="709" y="551"/><use href="#pier" x="623" y="600"/>
<use href="#pilecap" x="1208" y="435"/><use href="#pilecap" x="1135" y="477"/><use href="#pilecap" x="1063" y="519"/><use href="#pilecap" x="990" y="561"/><use href="#pilecap" x="918" y="602"/><use href="#pilecap" x="845" y="644"/><use href="#pilecap" x="773" y="686"/>
<g fill="none">
<path d="M834 490l537-309" stroke="#c4141e" stroke-width="1.200"/>
<path d="M852 480l38-22M937 431l38-22M1023 381l38-21" stroke="#8a1050" stroke-width="1.300"/>
<path d="M834 490L75 929" stroke="#cc2832" stroke-dasharray="1.500 2.500"/>
<path d="M834 490l537 311" stroke="#1eb41e" stroke-dasharray="1.500 3"/>
</g>
<path d="M854 836v32l7-6 5 11 9-2-5-9 10-2z" fill="#164d80" stroke="#d9e3ec" stroke-width="2"/>
</svg>
</section>
</main>
<div class="measure"><i class="grip"></i><label for="medidas">Medidas</label><input id="medidas" type="text"></div>
<footer class="status"><span>Clique ou arraste para selecionar objetos. Shift = Adicionar/Subtrair. Ctrl = Adicionar. Shift + Ctrl = Subtrair.</span></footer>
</div>
</body>
</html>
```
FILE: styles.css
```css
* { box-sizing: border-box; }
body {
  margin: 0;
  background: #f1f0f6;
  color: #333;
  font: 13px/18px "Open Sans", "Noto Sans", sans-serif;
}
button { border: 0; padding: 0; background: none; font: inherit; color: inherit; }
.sprite { position: absolute; width: 0; height: 0; }
.app { display: flex; flex-direction: column; min-height: 100vh; border-bottom: 2px solid #55555a; }
.menu { display: flex; gap: 15px; height: 27px; padding: 0 11px; align-items: center; border-bottom: 1px solid #dad8e6; }
.bar { display: flex; height: 38px; }
.group { display: flex; align-items: center; padding-right: 2px; border: 1px solid #dfddea; border-width: 0 1px 1px 0; }
.grip { flex: none; width: 12px; height: 18px; background: radial-gradient(#c3c3ce 1px, transparent 1px) 6px 0 / 3px 3px repeat-y; }
.grip.wide { display: block; width: 18px; height: 6px; margin: 2px auto 4px; background-repeat: repeat; background-position: 0 0; }
.tool { flex: none; display: grid; place-items: center; width: 34px; height: 34px; }
.tool svg { width: 28px; height: 28px; }
.tool.active { border: 1px solid #2372b5; border-radius: 4px; background: #dceffa; }
.red { color: #f00; }
.gray { color: #444; }
.drop { flex: none; width: 13px; height: 32px; display: grid; place-items: center; }
.drop::after { content: ""; border: 4px solid transparent; border-top-color: #85858c; border-bottom-width: 0; }
.drop.boxed { width: 12px; border: 1px solid #c4c4c4; border-radius: 3px; background: #e8e8e8; }
.sep { flex: none; width: 2px; height: 22px; margin: 0 3px 0 2px; background: #9c9c9f; }
.work { display: flex; flex: 1; }
.side { width: 75px; padding: 0 4px 0 2px; border-right: 1px solid #d6d5e0; }
.grid { display: grid; grid-template-columns: 34px 34px; }
.rule { grid-column: 1 / 3; height: 2px; margin: 3px 4px 2px 7px; background: #99999b; }
.viewport { position: relative; flex: 1; margin-right: 2px; background: #bfc1c8; }
.scene { position: absolute; inset: 0; width: 100%; height: 100%; display: block; }
.measure { display: flex; align-items: center; width: 318px; height: 37px; border: 1px solid #dfddea; border-left: 0; }
.measure label { width: 134px; }
.measure input { width: 170px; height: 24px; border: 1px solid #b1b1b8; border-radius: 3px; background: #f3f2f8; font: inherit; }
.status { height: 25px; padding: 5px 9px; font-family: "Noto Sans", "Open Sans", sans-serif; }
.status span { display: block; padding-left: 7px; border-left: 1px solid #d6d5e0; }
.glyph-label { font: 700 10px "Liberation Serif", serif; fill: #315d84; }
.glyph-mini { font: 700 7px "Liberation Sans", sans-serif; fill: #315d84; }
.glyph-big { font: italic 700 24px "Liberation Sans", sans-serif; fill: #57ace9; }
.glyph-big.shade { fill: #2372b5; }
```
